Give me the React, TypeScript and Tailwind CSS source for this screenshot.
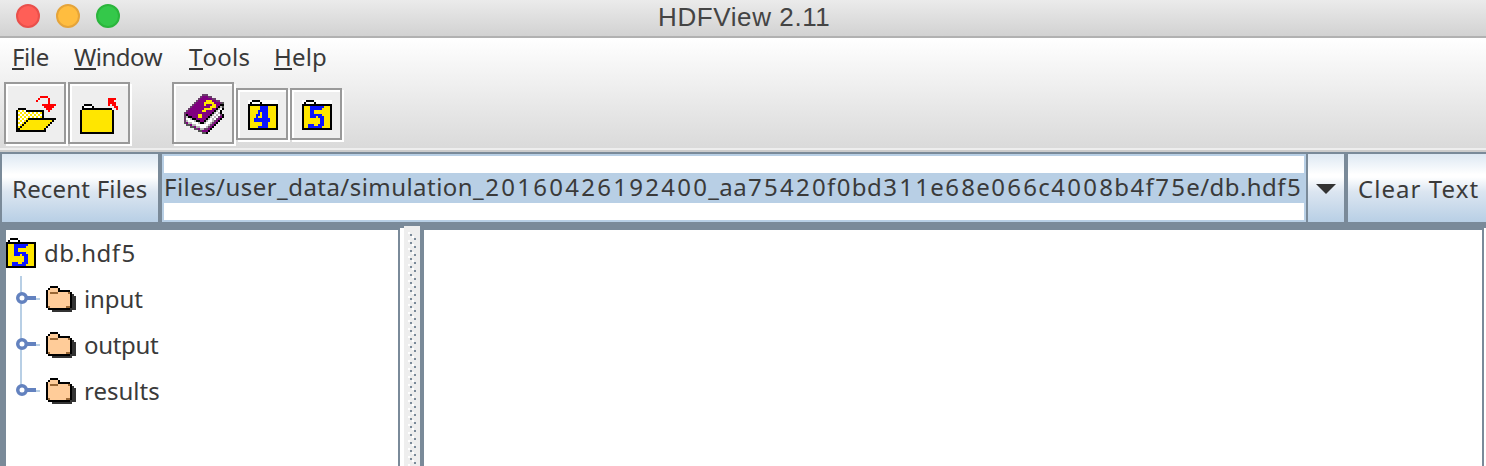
import type { ReactNode } from 'react';

const palette: Record<string, string> = {
  k: '#000000',
  y: '#ffe600',
  w: '#ffffff',
  r: '#ff0000',
  b: '#0a14ff',
  P: '#800080',
  m: '#6b3f6b',
  g: '#b8b8b8',
  s: '#555555',
  p: '#ffcc99',
  n: '#996633',
  d: '#333333',
};

function PixelIcon({ rows, className = '' }: { rows: string[]; className?: string }) {
  const cols = Math.max(...rows.map((r) => r.length));
  return (
    <svg
      width={cols * 2}
      height={rows.length * 2}
      viewBox={`0 0 ${cols} ${rows.length}`}
      shapeRendering="crispEdges"
      className={`block shrink-0 ${className}`}
    >
      {rows.flatMap((row, y) =>
        [...row].map((c, x) =>
          palette[c] ? <rect key={`${x}-${y}`} x={x} y={y} width={1} height={1} fill={palette[c]} /> : null,
        ),
      )}
    </svg>
  );
}

const openFolder = [
  '............rrrr....',
  '...........r....r...',
  '..........r.....r...',
  '................r...',
  '.............rrrrrrr',
  '..............rrrrr.',
  '.kkkk..........rrr..',
  'kywywkkkkkkkkk..r...',
  'kwywywywywywyk......',
  'kywywywywywywk......',
  'kwywywywywywyk......',
  'kywywykkkkkkkkkkkkkk',
  'kwywykyyyyyyyyyyyyk.',
  'kywykyyyyyyyyyyyyk..',
  'kwykyyyyyyyyyyyyk...',
  'kykyyyyyyyyyyyyk....',
  'kkyyyyyyyyyyyyk.....',
  'kkkkkkkkkkkkkkk.....',
];

const closedFolder = [
  '..............rrrr.',
  '..............rrr..',
  '..............rrrr.',
  '..kkkk........r.rr.',
  '.kwwwwk..........rr',
  '.kkkkkkkkkkkkkkk..r',
  ...Array<string>(11).fill('kyyyyyyyyyyyyyyyk'),
  'kkkkkkkkkkkkkkkkk',
];

const book = [
  '.........mmm........',
  '........mPPPmm......',
  '.......mPPPPPPmm....',
  '......mPPPPyyyPPmm..',
  '.....mPPPPyyyyyPPPms',
  '....mPPPPPyPPPyyPPkk',
  '...mPPPPPPPPPyyyPkgs',
  '..mPPPPPPPyyyyPPkgwk',
  '.mPPPPPPPyyPPPPkgwk.',
  'mPPPPPPPPPPPPPkgwgk.',
  'mkPPPPPyyPPPPkgwgwmk',
  'mgkkPPPyyPPPkgwgwmPk',
  'mwwgkkPPPPPkgwgwmPk.',
  'mgwwwgkkPPkgwwgmPk..',
  'sPggwwwgkkgwwgmPk...',
  '.ssPggwwwwwwgmPk....',
  '...ssPggwwwgmPk.....',
  '.....smPggmmPk......',
  '.......ssPPPk.......',
  '.........ssk........',
];

const hdf4 = [
  'wwkkkkwwwwwwwww',
  'wkwwwwkwwwwwwww',
  'kkkkkkkkkkkkkkk',
  'kyyyyybbbbyyyyk',
  'kyyyyybbbbyyyyk',
  'kyyyybbbbbyyyyk',
  'kyyyybybbbyyyyk',
  'kyyybbybbbyyyyk',
  'kyyybyybbbyyyyk',
  'kyybbbbbbbbyyyk',
  'kyybbbbbbbbyyyk',
  'kyyyyyybbbyyyyk',
  'kyyyyyybbbyyyyk',
  'kyyyybbbbbyyyyk',
  'kkkkkkkkkkkkkkk',
];

const hdf5 = [
  'wwkkkkwwwwwwwww',
  'wkwwwwkwwwwwwww',
  'kkkkkkkkkkkkkkk',
  'kyyybbbbbbbyyyk',
  'kyyybbbbbbyyyyk',
  'kyyybbyyyyyyyyk',
  'kyyybbyyyyyyyyk',
  'kyyybbbbbbyyyyk',
  'kyyybbbybbbyyyk',
  'kyyyyyyyybbyyyk',
  'kyyyyyyyybbyyyk',
  'kyyyyyyyybbyyyk',
  'kyybbbyybbbyyyk',
  'kyybbbbbbbyyyyk',
  'kkkkkkkkkkkkkkk',
];

const group = [
  '..kkkk.........',
  '.kppppk........',
  'kpppppkkkkkk...',
  'kpnnnnpppppnk..',
  'kpppppppppppkd.',
  'kpppppppppppkdd',
  'kpppppppppppkdd',
  'kpppppppppppkdd',
  'kpppppppppppkdd',
  'kpppppppppppkdd',
  'knppppppppnnkdd',
  '.kkkkkkkkkkkddd',
  '...dddddddddd..',
];

function ToolButton({ size, children }: { size: 'lg' | 'sm'; children: ReactNode }) {
  return (
    <button
      className={`flex shrink-0 items-center justify-center border-2 border-[#999] bg-[#eee] shadow-[2px_2px_0_#fff,inset_2px_2px_0_#fff] ${
        size === 'lg' ? 'size-[62px]' : 'mt-[2px] size-[52px]'
      }`}
    >
      {children}
    </button>
  );
}

function MenuItem({ label, className }: { label: string; className: string }) {
  return (
    <span className={`block shrink-0 whitespace-nowrap ${className}`}>
      <span className="relative inline-block after:absolute after:inset-x-0 after:bottom-[3px] after:h-[2px] after:bg-[#333]">
        {label[0]}
      </span>
      {label.slice(1)}
    </span>
  );
}

/* Numerals are set wider than letters. */
function WideDigits({ text }: { text: string }) {
  return (
    <span className="tracking-[0.45px]">
      {text.split(/(\d+)/).map((part, i) =>
        i % 2 === 1 ? (
          <span key={i} className="ml-[1px] -mr-[1px] tracking-[2.27px]">
            {part}
          </span>
        ) : (
          part
        ),
      )}
    </span>
  );
}

function TreeRow({ label, last, className }: { label: string; last?: boolean; className: string }) {
  return (
    <div className="flex h-[46px] items-center">
      <svg width={26} height={46} viewBox="0 0 26 46" className="ml-[8px] block shrink-0">
        <rect x={6} y={0} width={2} height={last ? 22 : 46} fill="#b8cfe5" />
        <rect x={12} y={20} width={10} height={4} fill="#6382bf" />
        <rect x={22} y={22} width={4} height={2} fill="#b8cfe5" />
        <circle cx={8} cy={22} r={4.25} fill="#fff" stroke="#6382bf" strokeWidth={3.5} />
      </svg>
      <PixelIcon rows={group} className="ml-[6px]" />
      <span className={`ml-[8px] whitespace-nowrap ${className}`}>{label}</span>
    </div>
  );
}

const metal = 'bg-[linear-gradient(180deg,#dde8f3_0%,#ffffff_30%,#ffffff_34%,#dce6f1_55%,#b8cfe5_100%)]';

export default function App() {
  return (
    <div className="flex h-[466px] w-[1486px] flex-col overflow-hidden bg-[#7a8a99] font-['Noto_Sans','Open_Sans',sans-serif] text-[24px] leading-[32px] text-[#3a3a3a]">
      <header className="flex h-[38px] shrink-0 items-center border-b-2 border-[#b1b1b1] bg-linear-to-b from-[#ebebeb] to-[#d2d2d2] pl-[16px]">
        <div className="flex gap-4 pb-[4px]">
          <span className="size-6 rounded-full border-2 border-[#e9504b] bg-[#ff5f57]" />
          <span className="size-6 rounded-full border-2 border-[#e5a43a] bg-[#ffbd3f]" />
          <span className="size-6 rounded-full border-2 border-[#2bb53c] bg-[#34c84a]" />
        </div>
        <h1 className="ml-[538px] whitespace-nowrap pb-[2px] font-['Liberation_Sans',sans-serif] text-[26px] tracking-[0.6px] text-[#444]">
          HDFView 2.11
        </h1>
      </header>

      <div className="flex h-[110px] shrink-0 flex-col bg-linear-to-b from-white to-[#dadada]">
        <nav className="flex h-[44px] pt-[3px] pl-[12px]">
          <MenuItem label="File" className="w-[62px] tracking-[-0.4px]" />
          <MenuItem label="Window" className="w-[115px] tracking-[-0.5px]" />
          <MenuItem label="Tools" className="w-[85px] tracking-[0.2px]" />
          <MenuItem label="Help" className="w-[60px] tracking-[0.2px]" />
        </nav>
        <div className="flex items-center gap-[2px] pl-[4px]">
          <ToolButton size="lg">
            <PixelIcon rows={openFolder} className="mt-[2px] ml-[2px]" />
          </ToolButton>
          <ToolButton size="lg">
            <PixelIcon rows={closedFolder} className="mt-[6px]" />
          </ToolButton>
          <div className="w-[38px]" />
          <ToolButton size="lg">
            <PixelIcon rows={book} className="mt-[2px] ml-[2px]" />
          </ToolButton>
          <ToolButton size="sm">
            <PixelIcon rows={hdf4} className="mt-[2px] ml-[2px]" />
          </ToolButton>
          <ToolButton size="sm">
            <PixelIcon rows={hdf5} className="mt-[2px] ml-[2px]" />
          </ToolButton>
        </div>
      </div>
      <div className="h-[4px] shrink-0 border-b-2 border-[#ccc] bg-[#eee]" />

      <div className="mt-[2px] flex h-[68px] shrink-0 pl-[2px]">
        <button
          className={`flex w-[156px] shrink-0 items-center whitespace-nowrap pt-[2px] pl-[10px] tracking-[0.2px] ${metal}`}
        >
          Recent Files
        </button>
        <div className="ml-[4px] flex w-[1144px] shrink-0 items-center border-2 border-[#b8cfe5] bg-white">
          <div className="h-[30px] w-full whitespace-nowrap bg-[#b8cfe5] leading-[28px]">
            <WideDigits text="Files/user_data/simulation_20160426192400_aa75420f0bd311e68e066c4008b4f75e/db.hdf5" />
          </div>
        </div>
        <button className={`ml-[2px] flex w-[36px] shrink-0 items-center justify-center ${metal}`}>
          <svg width={20} height={10} viewBox="0 0 20 10" className="mt-[2px]">
            <path d="M0 0H20L10 10Z" fill="#333" />
          </svg>
        </button>
        <button
          className={`ml-[4px] flex w-[138px] shrink-0 items-center whitespace-nowrap pt-[2px] pl-[10px] tracking-[1.05px] ${metal}`}
        >
          Clear Text
        </button>
      </div>

      <main className="flex min-h-0 flex-1 pl-[6px]">
        <aside className="mt-[8px] w-[392px] shrink-0 bg-white">
          <div className="flex h-[46px] items-center">
            <PixelIcon rows={hdf5} />
            <span className="ml-[8px]">
              <WideDigits text="db.hdf5" />
            </span>
          </div>
          <TreeRow label="input" className="tracking-[-0.1px]" />
          <TreeRow label="output" className="tracking-[-0.3px]" />
          <TreeRow label="results" last className="" />
        </aside>
        <div className="mt-[6px] ml-[2px] w-[4px] shrink-0 bg-white" />
        <div className="mt-[4px] w-[16px] shrink-0 bg-[#eee]">
          <svg width={16} height={240} className="block" shapeRendering="crispEdges">
            <defs>
              <pattern id="grip" x={4} y={6} width={8} height={8} patternUnits="userSpaceOnUse">
                <rect x={0} y={0} width={2} height={2} fill="#fff" />
                <rect x={2} y={2} width={2} height={2} fill="#7a8a99" />
                <rect x={4} y={4} width={2} height={2} fill="#fff" />
                <rect x={6} y={6} width={2} height={2} fill="#7a8a99" />
              </pattern>
            </defs>
            <rect x={4} y={6} width={8} height={234} fill="url(#grip)" />
          </svg>
        </div>
        <section className="mt-[8px] ml-[4px] w-[1058px] shrink-0 bg-white" />
        <div className="mt-[6px] ml-[2px] w-[2px] shrink-0 bg-white" />
      </main>
    </div>
  );
}
